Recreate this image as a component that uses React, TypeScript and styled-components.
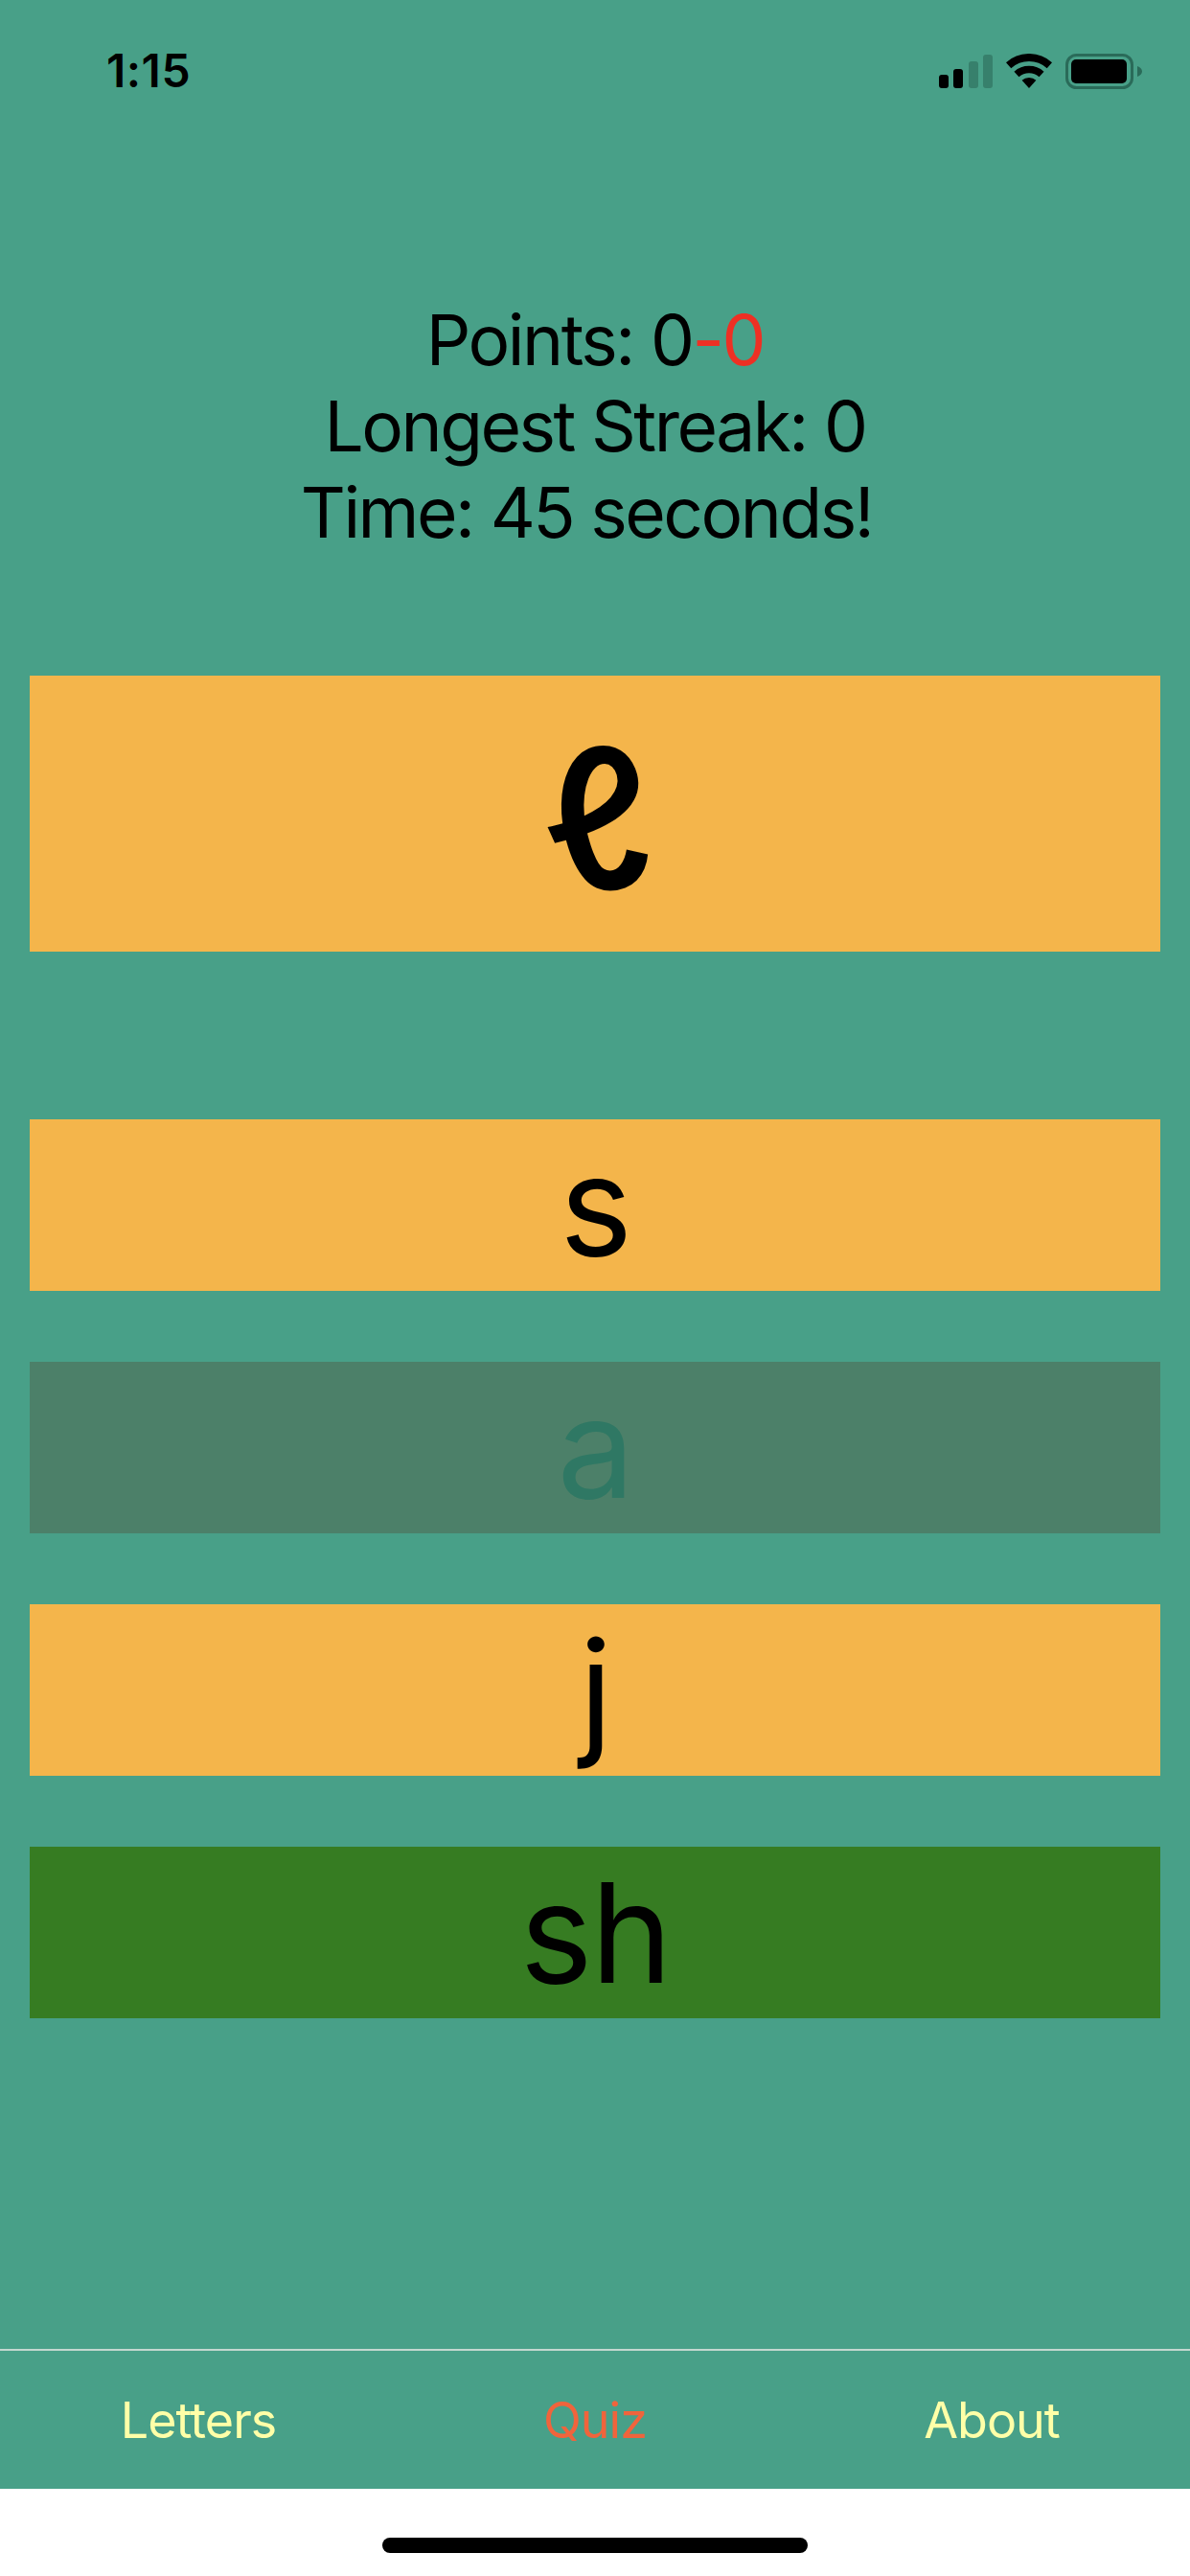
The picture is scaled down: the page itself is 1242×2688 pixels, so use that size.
import styled, { createGlobalStyle } from "styled-components";

const Global = createGlobalStyle`
  html, body { margin: 0; padding: 0; background: #fff; }
  body { font-family: Inter, "Noto Sans", "DejaVu Sans", sans-serif; }
`;

const Screen = styled.div`
  width: 1242px;
  height: 2688px;
  display: flex;
  flex-direction: column;
  overflow: hidden;
  color: #000;
`;

const Main = styled.main`
  flex: 1;
  background: #48a088;
  display: flex;
  flex-direction: column;
`;

const StatusBar = styled.header`
  height: 132px;
  padding: 0 50px 0 111px;
  box-sizing: border-box;
  display: flex;
  align-items: flex-start;
  justify-content: space-between;
`;

const Clock = styled.span`
  margin-top: 46px;
  font-size: 48px;
  line-height: 56px;
  font-weight: 600;
  letter-spacing: 0.5px;
`;

const StatusIcons = styled.div`
  margin-top: 56px;
  display: flex;
  align-items: flex-start;
  gap: 14px;
`;

const Stats = styled.section`
  margin-top: 178px;
  font-size: 73px;
  line-height: 90px;
  letter-spacing: -2.5px;
  text-align: center;
`;

const StatLine = styled.div<{ $trailing?: boolean }>`
  padding-right: ${(p) => (p.$trailing ? "18px" : "0")};
`;

const Red = styled.span`
  color: #ee3024;
`;

const Answers = styled.section`
  margin: 125px 31px 0;
  display: flex;
  flex-direction: column;
`;

const Prompt = styled.div`
  height: 288px;
  background: #f4b54b;
  display: flex;
  align-items: center;
  justify-content: center;
  margin-bottom: 175px;
`;

const PromptGlyph = styled.span`
  font-family: Lato, sans-serif;
  font-size: 205px;
  line-height: 1;
  font-weight: 700;
  display: inline-block;
  transform: translate(0, 0) skewX(15deg);
`;

const Choices = styled.div`
  display: flex;
  flex-direction: column;
  gap: 74px;
`;

const Choice = styled.button<{ $state?: "disabled" | "correct" }>`
  height: 179px;
  width: 100%;
  padding: 0;
  border: 0;
  display: flex;
  align-items: center;
  justify-content: center;
  font-family: inherit;
  font-size: 144px;
  line-height: 178px;
  letter-spacing: -2px;
  background: ${(p) =>
    p.$state === "disabled" ? "#4c8069" : p.$state === "correct" ? "#367c22" : "#f4b54b"};
  color: ${(p) => (p.$state === "disabled" ? "#2f7864" : "#000")};
`;

const TabBar = styled.nav`
  height: 146px;
  margin-top: auto;
  box-sizing: border-box;
  background: #48a088;
  border-top: 2px solid #c4d8d0;
  display: grid;
  grid-template-columns: repeat(3, 1fr);
  align-items: center;
  text-align: center;
`;

const Tab = styled.a<{ $active?: boolean }>`
  padding-top: 2px;
  font-size: 52px;
  line-height: 60px;
  letter-spacing: -1px;
  color: ${(p) => (p.$active ? "#f0643c" : "#ffffa8")};
`;

const HomeArea = styled.div`
  height: 91px;
  background: #fff;
  display: flex;
  justify-content: center;
`;

const HomeBar = styled.div`
  width: 444px;
  height: 16px;
  margin-top: 51px;
  border-radius: 8px;
  background: #000;
`;

function SignalIcon() {
  const bars = [
    { x: 0, h: 14, on: true },
    { x: 15, h: 20, on: true },
    { x: 31, h: 28, on: false },
    { x: 46, h: 35, on: false },
  ];
  return (
    <svg width="56" height="36" viewBox="0 0 56 36">
      {bars.map((b) => (
        <rect
          key={b.x}
          x={b.x}
          y={36 - b.h}
          width="10"
          height={b.h}
          rx="3"
          fill={b.on ? "#000" : "#37806c"}
        />
      ))}
    </svg>
  );
}

function WifiIcon() {
  return (
    <svg width="48" height="36" viewBox="0 0 48 36">
      <path d="M2.6 12.2A32 32 0 0 1 45.4 12.2" fill="none" stroke="#000" strokeWidth="8" />
      <path d="M10.95 21.5A19.5 19.5 0 0 1 37.05 21.5" fill="none" stroke="#000" strokeWidth="7.5" />
      <path d="M24 36L16.6 27.8A11 11 0 0 1 31.4 27.8Z" fill="#000" />
    </svg>
  );
}

function BatteryIcon() {
  return (
    <svg width="80" height="37" viewBox="0 0 80 37">
      <rect x="1.5" y="1.5" width="68" height="34" rx="10" fill="none" stroke="#2a6b59" strokeWidth="3" />
      <rect x="6" y="6" width="58" height="25" rx="5" fill="#000" />
      <path d="M75 13c3 1 5 3 5 5.5s-2 4.5-5 5.5z" fill="#2a6b59" />
    </svg>
  );
}

export default function App() {
  return (
    <Screen>
      <Global />
      <Main>
        <StatusBar>
          <Clock>1:15</Clock>
          <StatusIcons>
            <SignalIcon />
            <WifiIcon />
            <BatteryIcon />
          </StatusIcons>
        </StatusBar>
        <Stats>
          <StatLine>
            Points: 0<Red>-0</Red>
          </StatLine>
          <StatLine>Longest Streak: 0</StatLine>
          <StatLine $trailing>Time: 45 seconds!</StatLine>
        </Stats>
        <Answers>
          <Prompt>
            <PromptGlyph>ℓ</PromptGlyph>
          </Prompt>
          <Choices>
            <Choice>s</Choice>
            <Choice $state="disabled">a</Choice>
            <Choice>j</Choice>
            <Choice $state="correct">sh</Choice>
          </Choices>
        </Answers>
        <TabBar>
          <Tab>Letters</Tab>
          <Tab $active>Quiz</Tab>
          <Tab>About</Tab>
        </TabBar>
      </Main>
      <HomeArea>
        <HomeBar />
      </HomeArea>
    </Screen>
  );
}
